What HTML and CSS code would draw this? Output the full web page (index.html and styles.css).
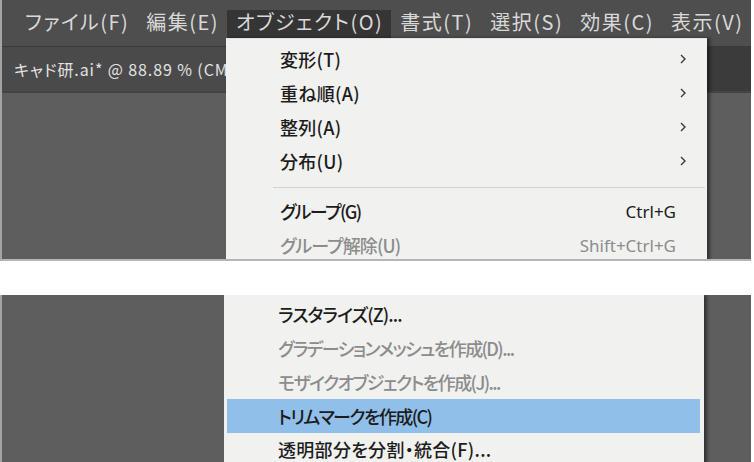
FILE: index.html
```html
<!DOCTYPE html>
<html lang="ja">
<head>
    <meta charset="UTF-8">
    <title>オブジェクト メニュー</title>
    <link rel="stylesheet" href="styles.css">
</head>
<body>
    <div class="shot shotTop">
        <div class="menubar">
            <span class="mbItem">ファイル(F)</span>
            <span class="mbItem">編集(E)</span>
            <span class="mbItem active">オブジェクト(O)</span>
            <span class="mbItem">書式(T)</span>
            <span class="mbItem">選択(S)</span>
            <span class="mbItem">効果(C)</span>
            <span class="mbItem">表示(V)</span>
        </div>
        <div class="tabbar">
            <div class="tab">キャド研.ai* @ 88.89 % (CM</div>
        </div>
        <div class="canvas"></div>

        <div class="dropdown dropTop">
            <div class="row"><span class="label">変形(T)</span><span class="key"></span><svg class="arrow" viewBox="0 0 6 10"><path d="M1 1 L5 5 L1 9"/></svg></div>
            <div class="row"><span class="label">重ね順(A)</span><span class="key"></span><svg class="arrow" viewBox="0 0 6 10"><path d="M1 1 L5 5 L1 9"/></svg></div>
            <div class="row"><span class="label">整列(A)</span><span class="key"></span><svg class="arrow" viewBox="0 0 6 10"><path d="M1 1 L5 5 L1 9"/></svg></div>
            <div class="row"><span class="label">分布(U)</span><span class="key"></span><svg class="arrow" viewBox="0 0 6 10"><path d="M1 1 L5 5 L1 9"/></svg></div>
            <div class="sep"></div>
            <div class="row"><span class="label tightL">グループ(G)</span><span class="key">Ctrl+G</span></div>
            <div class="row off"><span class="label tightS">グループ解除(U)</span><span class="key">Shift+Ctrl+G</span></div>
        </div>
    </div>

    <div class="gap"></div>

    <div class="shot shotBottom">
        <div class="dropdown dropBottom">
            <div class="row"><span class="label tightS">ラスタライズ(Z)...</span></div>
            <div class="row off"><span class="label tightL">グラデーションメッシュを作成(D)...</span></div>
            <div class="row off"><span class="label tightL">モザイクオブジェクトを作成(J)...</span></div>
            <div class="row hover"><span class="label tightL">トリムマークを作成(C)</span></div>
            <div class="row last"><span class="label">透明部分を分割・統合(F)...</span></div>
        </div>
    </div>
</body>
</html>
```

FILE: styles.css
```css
body {
    margin: 0;
    width: 754px;
    height: 462px;
    overflow: hidden;
    background-color: white;
    font-family: "Noto Sans CJK JP", "Noto Sans", sans-serif;
    font-feature-settings: "palt";
}
.shot {
    position: relative;
    width: 749px;
    overflow: hidden;
    background-color: #5e5e5e;
    border-left: 2px solid #a4a4a4;
}
.shotTop {
    height: 259px;
    border-bottom: 2px solid #b6b6b6;
    display: flex;
    flex-direction: column;
}
.shotBottom {
    height: 167px;
}
.gap {
    height: 34px;
}

.menubar {
    height: 47px;
    flex: none;
    display: flex;
    align-items: flex-start;
    background-color: #4e4e4e;
    border-bottom: 1px solid #393939;
    padding-left: 14px;
    padding-top: 10px;
    box-sizing: border-box;
}
.mbItem {
    height: 28px;
    line-height: 23px;
    padding: 0 8px 0 9px;
    font-size: 20px;
    color: #d9d9d9;
    letter-spacing: 1.5px;
    white-space: nowrap;
}
.mbItem.active {
    background-color: #353535;
}

.tabbar {
    height: 44px;
    flex: none;
    display: flex;
    background-color: #3b3b3b;
    border-bottom: 2px solid #444;
}
.tab {
    width: 212px;
    background-color: #4a4a4a;
    color: #e2e2e2;
    font-size: 16px;
    letter-spacing: 0.9px;
    line-height: 44px;
    padding-left: 12px;
    white-space: nowrap;
}
.canvas {
    flex: 1;
}

.dropdown {
    position: absolute;
    background-color: #f1f1f0;
    box-shadow: 3px 0 3px rgba(0, 0, 0, 0.45);
    display: flex;
    flex-direction: column;
}
.dropTop {
    left: 224px;
    top: 38px;
    width: 481px;
    padding-top: 3px;
    border-top: 1px solid #e2e2e2;
}
.dropBottom {
    left: 222px;
    top: 0;
    width: 480px;
    padding-top: 2px;
}
.row {
    height: 34px;
    display: grid;
    grid-template-columns: 1fr auto 14px;
    align-items: center;
    padding: 0 17px 0 54px;
    font-size: 18px;
    font-weight: 500;
    letter-spacing: 0.3px;
    color: #1c1c1c;
    white-space: nowrap;
}
.row.off {
    color: #8c8c8c;
}
.row.hover {
    background-color: #90c0e9;
    margin: 0 4px 0 3px;
    padding-left: 51px;
}
.row.last {
    height: 32px;
}
.tightS {
    letter-spacing: -0.9px;
}
.tightL {
    letter-spacing: -1.6px;
}
.key {
    font-family: "Noto Sans", sans-serif;
    font-size: 17px;
    font-weight: 400;
    letter-spacing: 0;
}
.arrow {
    width: 6px;
    height: 10px;
    justify-self: center;
    fill: none;
    stroke: #3a3a3a;
    stroke-width: 1.4;
}
.sep {
    height: 1px;
    background-color: #d2d2d2;
    margin: 9px 2px 6px 47px;
}
```
